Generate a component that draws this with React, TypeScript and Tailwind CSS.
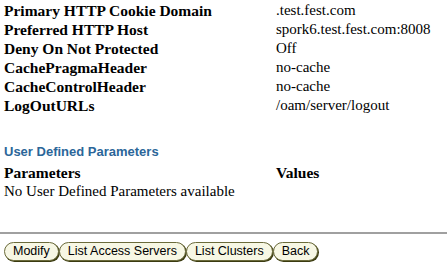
const rows: [string, string][] = [
  ["Primary HTTP Cookie Domain", ".test.fest.com"],
  ["Preferred HTTP Host", "spork6.test.fest.com:8008"],
  ["Deny On Not Protected", "Off"],
  ["CachePragmaHeader", "no-cache"],
  ["CacheControlHeader", "no-cache"],
  ["LogOutURLs", "/oam/server/logout"],
];

const buttons = ["Modify", "List Access Servers", "List Clusters", "Back"];

export default function App() {
  return (
    <div className="w-[447px] h-[270px] bg-white text-black font-['Liberation_Serif',serif] overflow-hidden">
      <div className="pl-[4px] pt-[1px]">
        {rows.map(([label, value]) => (
          <div key={label} className="flex h-[19px] items-center text-[15px] leading-[19px]">
            <div className="w-[272px] font-bold text-[15.5px]">{label}</div>
            <div>{value}</div>
          </div>
        ))}
      </div>

      <div className="pl-[4px] mt-[29px] font-['Liberation_Sans',sans-serif] font-bold text-[13px] text-[#2b6699] leading-[16px]">
        User Defined Parameters
      </div>
      <div className="pl-[4px] mt-[3px] flex h-[19px] items-center text-[15.5px] font-bold">
        <div className="w-[272px]">Parameters</div>
        <div>Values</div>
      </div>
      <div className="pl-[4px] h-[19px] flex items-center text-[15px]">
        No User Defined Parameters available
      </div>

      <div className="mt-[31px] border-t-2 border-[#a0a0a0]" />

      <div className="flex pl-[4px] mt-[8px] font-['Liberation_Sans',sans-serif] text-[12.5px]">
        {buttons.map((b) => (
          <button
            key={b}
            className="h-[19px] px-[8px] rounded-full border border-[#6b6b3b] bg-[#f7f7e4] shadow-[1px_1px_0_#3b3b10] leading-[17px] text-black"
          >
            {b}
          </button>
        ))}
      </div>
    </div>
  );
}
